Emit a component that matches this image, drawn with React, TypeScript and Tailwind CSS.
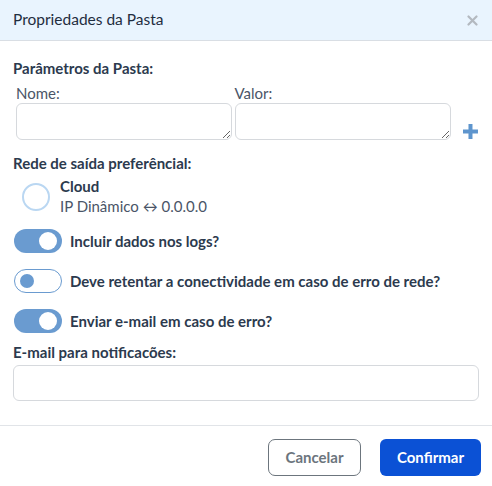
import React from "react";

function Toggle({ on }: { on: boolean }) {
  if (on) {
    return (
      <div className="relative h-6 w-12 shrink-0 rounded-full bg-[#6a9bd0]">
        <div className="absolute right-[5px] top-[3px] h-[18px] w-[18px] rounded-full bg-white" />
      </div>
    );
  }
  return (
    <div className="relative h-6 w-12 shrink-0 rounded-full border border-[#6a9bd0] bg-white">
      <div className="absolute left-[5px] top-[4px] h-[14px] w-[14px] rounded-full bg-[#6a9bd0]" />
    </div>
  );
}

export default function App() {
  return (
    <div
      className="w-[492px] h-[486px] bg-white text-[#2c3a4e]"
      style={{ fontFamily: "Lato, 'Noto Sans', sans-serif" }}
    >
      <div className="flex h-[41px] items-center justify-between border-b border-[#d9dee4] bg-[#e9f4fe] pl-[13px] pr-[13px]">
        <span className="text-[15.5px] text-[#1f2d3f]">Propriedades da Pasta</span>
        <svg width="11" height="11" viewBox="0 0 11 11" className="mr-[1px]">
          <path d="M1.5 1.5 L9.5 9.5 M9.5 1.5 L1.5 9.5" stroke="#b3b9c0" strokeWidth="2.2" strokeLinecap="round" />
        </svg>
      </div>

      <div className="px-[13px]">
        <div className="pt-[17px] text-[15px] font-bold leading-5">Parâmetros da Pasta:</div>
        <div className="mt-[5px] flex items-end pl-[3px]">
          <div className="flex w-[216px] flex-col">
            <span className="text-[15px] leading-5 text-[#4a5567]">Nome:</span>
            <textarea className="h-[37px] w-full rounded-[6px] border border-[#d6d9dd] bg-white" />
          </div>
          <div className="ml-[3px] flex w-[217px] flex-col">
            <span className="text-[15px] leading-5 text-[#4a5567]">Valor:</span>
            <textarea className="h-[37px] w-full rounded-[6px] border border-[#d6d9dd] bg-white" />
          </div>
          <svg width="17" height="17" viewBox="0 0 17 17" className="mb-0 ml-[11px]">
            <path d="M8.5 1 V16 M1 8.5 H16" stroke="#5e95cd" strokeWidth="4" />
          </svg>
        </div>

        <div className="mt-[13px] text-[15px] font-bold leading-5">Rede de saída preferêncial:</div>
        <div className="mt-[3px] flex items-center pl-[9px]">
          <div className="h-[28px] w-[28px] rounded-full border-2 border-[#bad7f2]" />
          <div className="ml-[10px] flex flex-col">
            <span className="text-[15px] font-bold leading-5">Cloud</span>
            <span className="text-[15px] leading-[21px] text-[#4a5567]">IP Dinâmico ↔ 0.0.0.0</span>
          </div>
        </div>

        <div className="mt-[12px] flex items-center gap-[8px] pl-[1px]">
          <Toggle on />
          <span className="text-[15px] font-bold">Incluir dados nos logs?</span>
        </div>
        <div className="mt-[16px] flex items-center gap-[8px] pl-[1px]">
          <Toggle on={false} />
          <span className="text-[15px] font-bold">Deve retentar a conectividade em caso de erro de rede?</span>
        </div>
        <div className="mt-[16px] flex items-center gap-[8px] pl-[1px]">
          <Toggle on />
          <span className="text-[15px] font-bold">Enviar e-mail em caso de erro?</span>
        </div>

        <div className="mt-[9px] text-[15px] font-bold leading-5">E-mail para notificacões:</div>
        <input className="mt-[3px] h-[36px] w-[466px] rounded-[6px] border border-[#d6d9dd] bg-white" />
      </div>

      <div className="mt-[24px] flex justify-end gap-[19px] border-t border-[#e1e4e8] pr-[11px] pt-[13px]">
        <button className="h-[37px] w-[93px] rounded-[7px] border border-[#6c757d] bg-white text-[15px] font-bold text-[#6c757d]">
          Cancelar
        </button>
        <button className="h-[37px] w-[101px] rounded-[6px] bg-[#0b51d5] text-[15px] font-bold text-white">
          Confirmar
        </button>
      </div>
    </div>
  );
}
